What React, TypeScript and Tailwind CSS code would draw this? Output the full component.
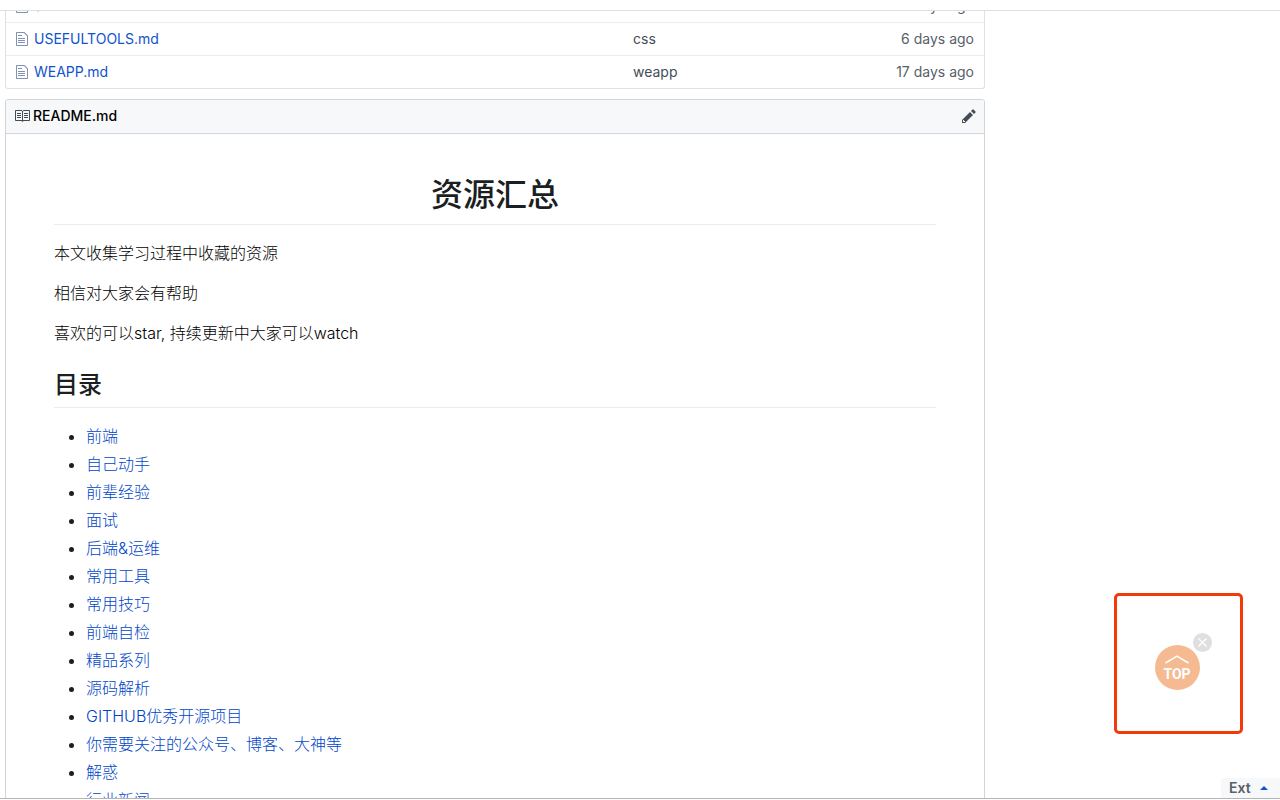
import React from "react";

const files = [
  { name: "SOURCE.md", message: "source", age: "6 days ago" },
  { name: "USEFULTOOLS.md", message: "css", age: "6 days ago" },
  { name: "WEAPP.md", message: "weapp", age: "17 days ago" },
];

const sections = [
  "前端",
  "自己动手",
  "前辈经验",
  "面试",
  "后端&运维",
  "常用工具",
  "常用技巧",
  "前端自检",
  "精品系列",
  "源码解析",
  "GITHUB优秀开源项目",
  "你需要关注的公众号、博客、大神等",
  "解惑",
  "行业新闻",
];

function FileIcon() {
  return (
    <svg viewBox="0 0 12 16" className="h-4 w-3" fill="#8292b4" aria-hidden="true">
      <path
        fillRule="evenodd"
        d="M6 5H2V4h4v1zM2 8h7V7H2v1zm0 2h7V9H2v1zm0 2h7v-1H2v1zm10-7.500V14c0 .55-.45 1-1 1H1c-.55 0-1-.45-1-1V2c0-.55.45-1 1-1h7.500L12 4.500zM11 5L8 2H1v12h10V5z"
      />
    </svg>
  );
}

function BookIcon() {
  return (
    <svg viewBox="0 0 16 16" className="size-4" fill="#444d56" aria-hidden="true">
      <path
        fillRule="evenodd"
        d="M3 5h4v1H3V5zm0 3h4V7H3v1zm0 2h4V9H3v1zm11-5h-4v1h4V5zm0 2h-4v1h4V7zm0 2h-4v1h4V9zm2-6v9c0 .55-.45 1-1 1H9.500l-1 1-1-1H2c-.55 0-1-.45-1-1V3c0-.55.45-1 1-1h5.500l1 1 1-1H15c.55 0 1 .45 1 1zm-8 .5L7.500 3H2v9h6V3.500zm7-.5H9.500l-.5.5V12h6V3z"
      />
    </svg>
  );
}

function PencilIcon() {
  return (
    <svg viewBox="0 0 14 16" className="h-4 w-3.5" fill="#444d56" aria-hidden="true">
      <path
        fillRule="evenodd"
        d="M0 12v3h3l8-8-3-3-8 8zm3 2H1v-2h1v1h1v1zm10.300-9.300L12 6 9 3l1.300-1.300a.996.996 0 0 1 1.410 0l1.590 1.590c.39.39.39 1.020 0 1.410z"
      />
    </svg>
  );
}

export default function App() {
  return (
    <div className="relative flex h-screen flex-col overflow-hidden bg-white font-['Inter','Noto_Sans_CJK_SC',sans-serif] text-[#1b1f23]">
      <header className="h-[11px] shrink-0 border-b border-[#dcdfe3]" />

      <main className="min-h-0 flex-1 overflow-hidden pr-[295px] pl-[5px]">
        <div className="-mt-[22px] rounded-b-[3px] border border-t-0 border-[#dfe2e5]">
          <table className="w-full table-fixed text-sm leading-5">
            <tbody>
              {files.map((file) => (
                <tr key={file.name} className="h-[33px] border-t border-[#eaecef] last:h-8">
                  <td className="w-[618px] pl-[10px]">
                    <div className="flex items-center gap-[6px]">
                      <FileIcon />
                      <a href="#" className="text-[#1053cc]">{file.name}</a>
                    </div>
                  </td>
                  <td className="pl-[9px] text-[#444d56]">{file.message}</td>
                  <td className="pr-[10px] text-right text-[#586069]">{file.age}</td>
                </tr>
              ))}
            </tbody>
          </table>
        </div>

        <section className="mt-[10px] rounded-t-[3px] border border-[#d1d5da]">
          <div className="flex h-[34px] items-center justify-between rounded-t-[2px] border-b border-[#d1d5da] bg-[#f6f8fa] pr-2 pl-2">
            <h3 className="flex items-center gap-[3px] text-sm font-medium text-black">
              <BookIcon />
              README.md
            </h3>
            <button type="button" aria-label="Edit README.md">
              <PencilIcon />
            </button>
          </div>

          <article className="px-12 pt-[41px] text-base leading-6 font-light">
            <h1 className="mb-4 border-b border-[#eaecef] pb-[9px] text-center text-[32px] leading-10 font-medium">
              资源汇总
            </h1>
            <p className="mb-4 text-black">本文收集学习过程中收藏的资源</p>
            <p className="mb-4 text-black">相信对大家会有帮助</p>
            <p className="mb-6 text-black">喜欢的可以star, 持续更新中大家可以watch</p>
            <h2 className="mb-4 border-b border-[#eaecef] pt-px pb-[7px] text-2xl leading-[30px] font-medium">目录</h2>
            <ul className="list-disc space-y-1 pl-8">
              {sections.map((title) => (
                <li key={title}>
                  <a href="#" className="text-[#0046c8]">{title}</a>
                </li>
              ))}
            </ul>
          </article>
        </section>
      </main>

      <aside className="absolute right-[37px] bottom-[66px] flex h-[141px] w-[129px] items-center justify-center rounded-[5px] border-[3px] border-[#f13a08]">
        <div className="relative mt-[7px] mr-[3px]">
          <button
            type="button"
            className="flex size-[45px] flex-col items-center justify-center gap-0.5 rounded-full bg-[#f6ba92] pt-0.5 font-['Roboto',sans-serif] text-sm leading-4 font-bold text-white"
          >
            <svg viewBox="0 0 26 9" className="h-[9px] w-[26px]" fill="none" stroke="white" strokeWidth="1.500" aria-hidden="true">
              <path d="M1.500 8 13 1.200 24.500 8" />
            </svg>
            TOP
          </button>
          <button type="button" aria-label="Close" className="absolute -top-3 -right-3 size-[19px] rounded-full bg-[#dfdfdf]">
            <svg viewBox="0 0 19 19" className="size-[19px]" fill="none" stroke="white" strokeWidth="1.300" aria-hidden="true">
              <path d="m5.500 5.500 8 8m0-8-8 8" />
            </svg>
          </button>
        </div>
      </aside>

      <button
        type="button"
        className="absolute right-0 bottom-[2px] flex h-5 w-[59px] items-center gap-[9px] rounded-tl-[3px] bg-[#f6f8fa] pl-2 text-sm leading-5 font-semibold text-[#586069]"
      >
        Ext
        <svg viewBox="0 0 8 4" className="h-1 w-2" fill="#1053cc" aria-hidden="true">
          <path d="M0 4 4 0l4 4z" />
        </svg>
      </button>

      <footer className="h-[2px] shrink-0 border-t border-[#b4b4b4]" />
    </div>
  );
}
